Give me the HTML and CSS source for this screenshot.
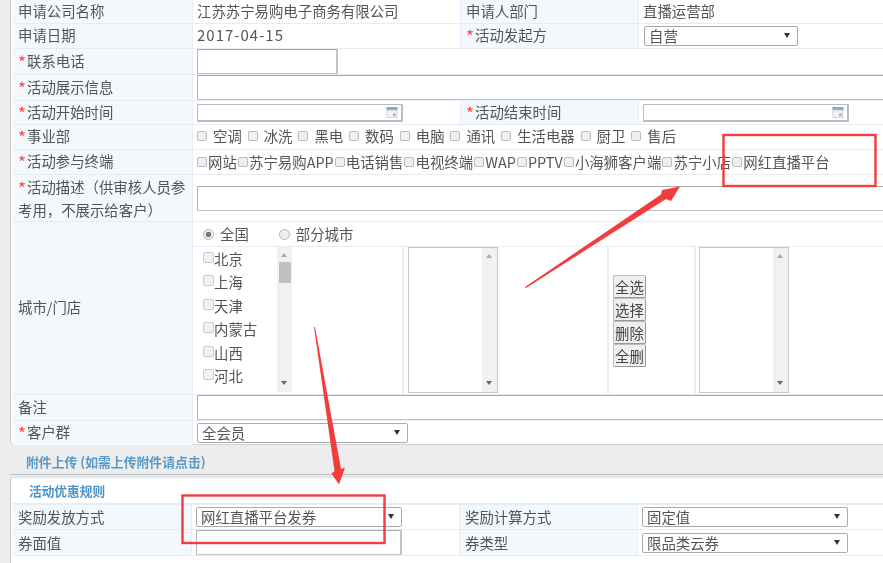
FILE: index.html
```html
<!DOCTYPE html>
<html lang="zh-CN">
<head>
<meta charset="utf-8">
<title>活动申请</title>
<link rel="stylesheet" href="styles.css">
</head>
<body>
<main class="page">
  <section class="panel panel-top">
    <table class="form form-t">
      <colgroup><col class="c-l1"><col class="c-v1"><col class="c-l2"><col class="c-v2"></colgroup>
      <tr class="h24"><th>申请公司名称</th><td class="txt">江苏苏宁易购电子商务有限公司</td><th>申请人部门</th><td class="txt">直播运营部</td></tr>
      <tr class="h25"><th>申请日期</th><td class="txt date">2017-04-15</td><th><i>*</i>活动发起方</th><td><div class="sel s-a"><select><option>自营</option></select></div></td></tr>
      <tr class="h26"><th><i>*</i>联系电话</th><td colspan="3"><input class="field w-phone" type="text"></td></tr>
      <tr class="h26"><th><i>*</i>活动展示信息</th><td colspan="3"><input class="field w-full" type="text"></td></tr>
      <tr class="h24"><th><i>*</i>活动开始时间</th>
        <td><div class="datebox"><svg class="cal" viewBox="0 0 12 12"><rect width="12" height="12" fill="#c5d3e6"/><rect y="0" width="12" height="3" fill="#8fa9cc"/><rect x="1" y="4" width="10" height="7" fill="#eef3f9"/><rect x="7" y="7" width="3" height="3" fill="#e0a0a0"/></svg></div></td>
        <th><i>*</i>活动结束时间</th>
        <td><div class="datebox"><svg class="cal" viewBox="0 0 12 12"><rect width="12" height="12" fill="#c5d3e6"/><rect y="0" width="12" height="3" fill="#8fa9cc"/><rect x="1" y="4" width="10" height="7" fill="#eef3f9"/><rect x="7" y="7" width="3" height="3" fill="#e0a0a0"/></svg></div></td></tr>
      <tr class="h24"><th><i>*</i>事业部</th><td colspan="3"><div class="checks spaced">
        <label><input type="checkbox">空调</label><label><input type="checkbox">冰洗</label><label><input type="checkbox">黑电</label><label><input type="checkbox">数码</label><label><input type="checkbox">电脑</label><label><input type="checkbox">通讯</label><label><input type="checkbox">生活电器</label><label><input type="checkbox">厨卫</label><label><input type="checkbox">售后</label>
      </div></td></tr>
      <tr class="h25"><th><i>*</i>活动参与终端</th><td colspan="3"><div class="checks tight">
        <label><input type="checkbox">网站</label><label><input type="checkbox">苏宁易购APP</label><label><input type="checkbox">电话销售</label><label><input type="checkbox">电视终端</label><label><input type="checkbox">WAP</label><label><input type="checkbox">PPTV</label><label><input type="checkbox">小海狮客户端</label><label><input type="checkbox">苏宁小店</label><label><input type="checkbox">网红直播平台</label>
      </div></td></tr>
      <tr class="h47"><th class="wrap"><i>*</i>活动描述（供审核人员参考用，不展示给客户）</th><td colspan="3"><input class="field w-full" type="text"></td></tr>
      <tr class="h173"><th>城市/门店</th><td colspan="3" class="city">
        <div class="radios">
          <label><input type="radio" name="scope" checked>全国</label>
          <label><input type="radio" name="scope">部分城市</label>
        </div>
        <div class="picker">
          <div class="p-cities">
            <ul class="cities">
              <li><input type="checkbox">北京</li><li><input type="checkbox">上海</li><li><input type="checkbox">天津</li><li><input type="checkbox">内蒙古</li><li><input type="checkbox">山西</li><li><input type="checkbox">河北</li>
            </ul>
            <div class="bar thumbed"><b class="up"></b><span class="thumb"></span><b class="down"></b></div>
          </div>
          <div class="p-list"><div class="listbox"><div class="bar"><b class="up"></b><b class="down"></b></div></div></div>
          <div class="p-btns"><button>全选</button><button>选择</button><button>删除</button><button>全删</button></div>
          <div class="p-list last"><div class="listbox"><div class="bar"><b class="up"></b><b class="down"></b></div></div></div>
        </div>
      </td></tr>
      <tr class="h26"><th>备注</th><td colspan="3"><input class="field w-full" type="text"></td></tr>
      <tr class="h25"><th><i>*</i>客户群</th><td colspan="3"><div class="sel s-b"><select><option>全会员</option></select></div></td></tr>
    </table>
  </section>
  <div class="band">附件上传 (如需上传附件请点击)</div>
  <section class="panel panel-bottom">
    <div class="sub">活动优惠规则</div>
    <table class="form form-b">
      <colgroup><col class="c-l1b"><col class="c-v1"><col class="c-l2"><col class="c-v2"></colgroup>
      <tr class="h25"><th>奖励发放方式</th><td><div class="sel s-b2"><select><option>网红直播平台发券</option></select></div></td><th>奖励计算方式</th><td><div class="sel s-c"><select><option>固定值</option></select></div></td></tr>
      <tr class="h26"><th>券面值</th><td><input class="field w-coupon" type="text"></td><th>券类型</th><td><div class="sel s-c"><select><option>限品类云券</option></select></div></td></tr>
    </table>
  </section>
</main>
<svg class="marks" viewBox="0 0 883 563" aria-hidden="true">
  <rect x="723.5" y="135" width="152" height="51" />
  <rect x="182.5" y="495.5" width="202" height="47.5" />
  <polygon class="arrow" points="525,287 661,194.5 662,190 680,186.5 671,201 666,199 526,288"/>
  <polygon class="arrow" points="314,327 334.5,471 331.5,473.5 339,484.5 345,467.5 341,469 315,327"/>
</svg>
</body>
</html>
```

FILE: styles.css
```css
* { box-sizing: border-box; }
html, body { margin: 0; height: 563px; overflow: hidden; }
body {
  background: #fff;
  color: #555;
  font-family: "Noto Sans CJK SC", "Noto Sans", sans-serif;
  font-size: 14.4px;
  text-spacing-trim: space-all;
  position: relative;
}
.page { width: 883px; height: 563px; background: #ededed; padding-left: 10px; overflow: hidden; filter: blur(.35px); }
.panel { background: #fff; border-left: 1px solid #c9c9c9; padding-left: 2px; width: 873px; }
.panel-top { height: 445px; border-bottom: 1px solid #d5d5d5; border-bottom-left-radius: 4px; }
.panel-bottom { height: 87px; margin-top: 1px; border-top: 2px solid #dfe5ee; border-top-left-radius: 4px; }
.band { height: 30px; padding: 7px 0 0 16px; font-size: 12.85px; line-height: 20px; font-weight: 700; color: #5a9ac8; border-bottom: 1px solid #bdbdbd; }
.sub { height: 27px; padding-left: 16px; font-size: 12.7px; line-height: 25px; font-weight: 700; color: #4c94c8; border-bottom: 2px solid #e6ecf6; }

.form { table-layout: fixed; border-collapse: separate; border-spacing: 0; width: 870px; }
.c-l1 { width: 180px; } .c-l1b { width: 179px; } .c-v1 { width: 268px; } .c-l2 { width: 178px; } .c-v2 { width: 245px; }
th, td { padding: 0; border-bottom: 1px solid #e6ecf6; vertical-align: middle; line-height: 20px; overflow: hidden; white-space: nowrap; }
th { background: #f3f8fc; border-right: 1px solid #e8eef8; padding-left: 5px; text-align: left; font-weight: 400; }
.form-t th { padding-bottom: 2px; }
.form-t td.txt { padding-bottom: 2px; }
th.wrap { white-space: normal; line-height: 23px; }
.form-t th.wrap { padding-bottom: 0; }
td { padding-left: 4px; border-right: 1px solid #e8eef8; }
td[colspan] { border-right: 0; }
td:last-child { border-right: 0; }
th i { color: #f44; font-style: normal; display: inline-block; width: 9px; font-size: 17px; line-height: 10px; vertical-align: -2px; }
td.date { letter-spacing: 1px; font-size: 15px; }
.h24 { height: 24px; } .h25 { height: 25px; } .h26 { height: 26px; } .h47 { height: 47px; } .h173 { height: 173px; }

.field { display: block; height: 25px; background: #fff; border: 1px solid #c4c4c4; border-top-color: #a9a9a9; border-left-color: #b5b5b5; border-width: 1px 2px 1px 1px; padding: 0; border-radius: 1px; }
.w-phone { width: 141px; }
.w-full { width: 700px; }
.w-coupon { width: 206px; }
.datebox { width: 206px; height: 18px; border: 1px solid #bcbcbc; border-width: 1px 2px 2px 1px; background: #fff; border-radius: 1px; display: flex; align-items: center; justify-content: flex-end; padding-right: 3px; }
.cal { width: 12px; height: 11px; }

.sel { position: relative; height: 20px; background: #fff; border: 1px solid #aaa; border-radius: 2px; }
.sel select { appearance: none; -webkit-appearance: none; border: 0; background: transparent; width: 100%; height: 18px; padding: 0 0 0 4px; font: inherit; color: #555; line-height: 18px; display: block; }
.sel::after { content: ""; position: absolute; right: 7px; top: 6px; border: solid transparent; border-width: 5px 3px 0; border-top-color: #333; }
.s-a { width: 154px; margin-left: 1px; }
.s-b { width: 211px; }
.s-b2 { width: 206px; }
.s-c { width: 206px; }

.checks { display: flex; align-items: center; height: 22px; }
.checks label { display: inline-flex; align-items: center; }
input[type=checkbox] { appearance: none; -webkit-appearance: none; width: 10px; height: 10px; margin: 0; background: #efefef; border: 1px solid #bbb; border-radius: 2px; flex: none; }
.spaced { margin-bottom: 2px; }
.spaced label { margin-right: 5.9px; }
.spaced input { margin-right: 6px; }
.tight input { margin-right: 1.1px; margin-left: 1.1px; }
.tight label:first-child input { margin-left: 0; }

td.city { padding: 0; }
.radios { height: 25px; display: flex; align-items: center; padding-left: 10px; gap: 30px; border-bottom: 1px solid #e8eef8; }
.radios label { display: inline-flex; align-items: center; }
input[type=radio] { appearance: none; -webkit-appearance: none; width: 11px; height: 11px; margin: 0 6px 0 0; background: #eee; border: 1px solid #b5b5b5; border-radius: 50%; }
input[type=radio]:checked { background: radial-gradient(circle, #777 0 2.5px, #eee 3px); }
.picker { display: flex; height: 147px; }
.p-cities { width: 211px; display: flex; padding-left: 10px; border-right: 2px solid #e8eef8; }
.cities { list-style: none; margin: 0; padding: 0; width: 74px; }
.cities li { height: 23.5px; display: flex; align-items: center; }
.cities input { width: 11px; height: 11px; margin: 0 0 3px; background: #f1f1f1; border-color: #ccc; }
.bar { width: 15px; height: 145px; background: #f1f1f1; position: relative; flex: none; }
.bar .up, .bar .down { position: absolute; left: 4px; width: 0; height: 0; border: solid transparent; border-width: 0 3.5px; }
.bar .up { top: 6px; border-bottom: 4px solid #aaa; }
.bar .down { bottom: 7px; border-top: 4px solid #666; }
.thumb { position: absolute; left: 2px; top: 15px; width: 12px; height: 21px; background: #c1c1c1; }
.p-list { width: 205px; padding-left: 4px; border-right: 2px solid #e8eef8; }
.p-list.last { width: 187px; padding-left: 3px; border-right: 0; }
.listbox { width: 90px; height: 146px; border: 1px solid #c6c6c6; display: flex; justify-content: flex-end; background: #fff; }
.listbox .bar { height: 144px; }
.p-btns { width: 87px; padding: 28px 0 0 4px; border-right: 2px solid #e8eef8; display: flex; flex-direction: column; align-items: flex-start; }
.p-btns button { width: 33px; height: 23px; padding: 0; background: #efefef; border: 1px solid #bdbdbd; border-right-color: #999; border-bottom-color: #999; border-radius: 2px; font: inherit; color: #444; line-height: 20px; }

.marks { position: absolute; left: 0; top: 0; width: 883px; height: 563px; filter: blur(.3px); }
.marks rect { fill: none; stroke: #f33c3c; stroke-width: 2.4; }
.marks .arrow { fill: #f33c3c; stroke: none; }
```
